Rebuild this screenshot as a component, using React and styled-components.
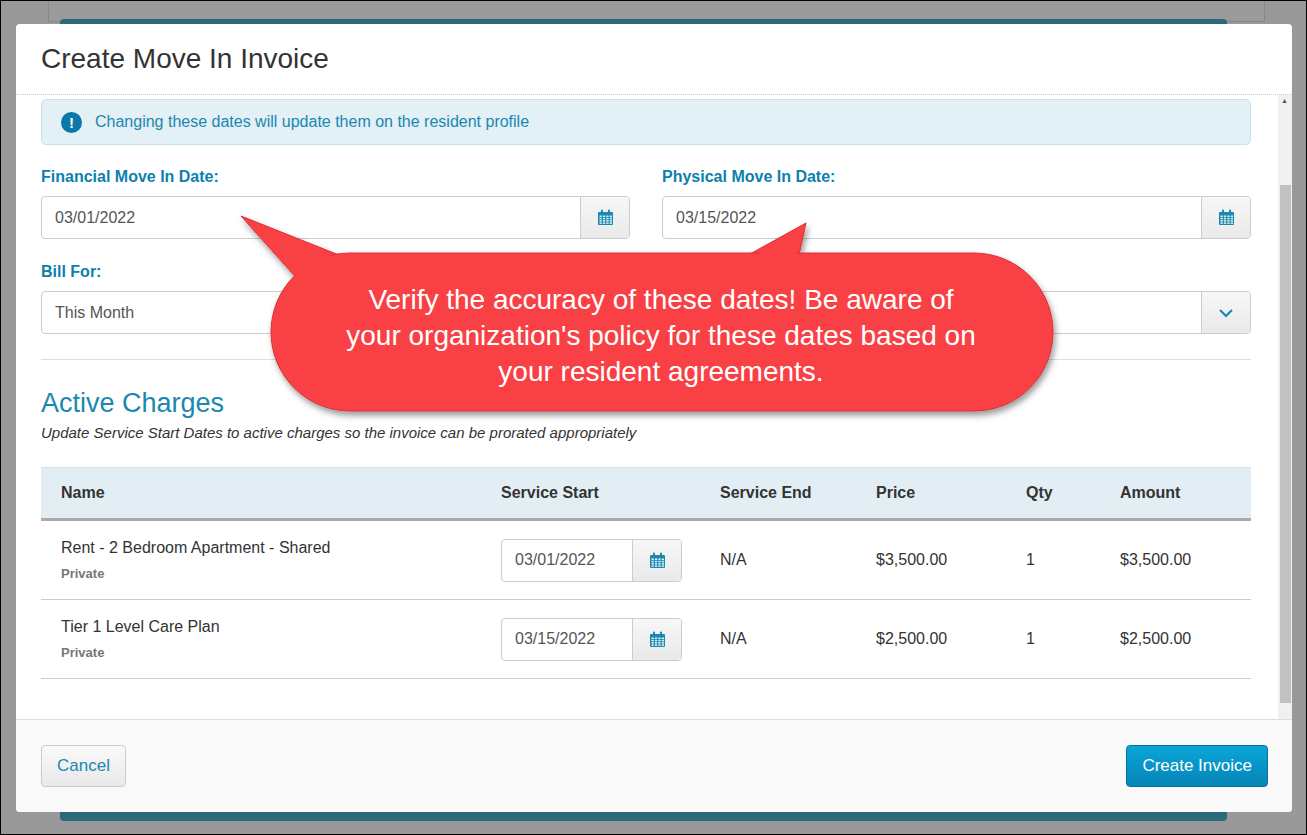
import React from "react";
import styled, { createGlobalStyle } from "styled-components";

const G = createGlobalStyle`
  html,body{margin:0;padding:0;}
  body{font-family:"Liberation Sans",Arial,sans-serif;width:1307px;height:835px;overflow:hidden;}
`;
const Page = styled.div`
  position:relative;width:1307px;height:835px;box-sizing:border-box;border:1px solid #000;
  background:#999;overflow:hidden;
`;
const BgCard = styled.div`
  position:absolute;left:47px;top:0;width:1215px;height:20px;border:1px solid #888;border-top:none;background:#9a9a9a;
`;
const BgBar = styled.div`
  position:absolute;left:59px;top:18px;width:1167px;height:5px;background:#2a6a7a;border-radius:4px 4px 0 0;
  &.b{top:810px;height:10px;border-radius:0 0 4px 4px;}
`;
const Modal = styled.div`
  position:absolute;left:15px;top:23px;width:1276px;height:788px;background:#fff;border-radius:4px;
  display:flex;flex-direction:column;overflow:hidden;
`;
const Header = styled.div`
  height:70px;border-bottom:1px dotted #ccc;display:flex;align-items:center;padding:0 25px;
  font-size:28px;color:#333;flex-shrink:0;
`;
const BodyWrap = styled.div`flex:1;display:flex;min-height:0;`;
const Body = styled.div`flex:1;padding:4px 27px 0 25px;`;
const Scroll = styled.div`
  width:14px;background:#f0f0f0;position:relative;
  &::before{content:"";position:absolute;left:2px;right:1px;top:90px;bottom:16px;background:#c1c1c1;}
  &::after{content:"▲";position:absolute;top:2px;left:3px;font-size:7px;color:#555;}
`;
const Alert = styled.div`
  height:44px;background:#e3f0f5;border:1px solid #c6e2ea;border-radius:5px;display:flex;align-items:center;
  padding-left:19px;gap:13px;color:#1a88b0;font-size:16px;
`;
const Excl = styled.span`
  width:21px;height:21px;border-radius:50%;background:#0a78a8;color:#fff;font-weight:bold;font-size:15px;
  display:flex;align-items:center;justify-content:center;
`;
const Row2 = styled.div`display:grid;grid-template-columns:1fr 1fr;gap:32px;margin-top:23px;`;
const Label = styled.div`color:#0c7fae;font-weight:bold;font-size:16px;margin-bottom:10px;`;
const BillFor = styled.div`margin-top:24px;`;
const InputGroup = styled.div`
  display:flex;height:43px;border:1px solid #ccc;border-radius:4px;overflow:hidden;box-sizing:border-box;
  width:${p=>p.w||"auto"};
`;
const Field = styled.div`flex:1;display:flex;align-items:center;padding-left:13px;font-size:16px;color:#555;`;
const Addon = styled.div`
  width:48px;border-left:1px solid #ccc;background:linear-gradient(#f7f7f7,#e9e9e9);
  display:flex;align-items:center;justify-content:center;color:#0c7fae;
`;
const Hr = styled.div`border-top:1px solid #ddd;margin:25px 0 28px;`;
const H2 = styled.div`font-size:27px;color:#1a88b0;`;
const Sub = styled.div`font-style:italic;font-size:15px;color:#333;margin-top:5px;`;
const Table = styled.div`margin-top:26px;`;
const Grid = styled.div`
  display:grid;grid-template-columns:440px 219px 156px 150px 94px 1fr;padding-left:20px;align-items:center;
`;
const THead = styled(Grid)`
  height:50px;background:#e3eef4;border-top:1px solid #d3e3ea;border-bottom:3px solid #aaa;font-weight:bold;font-size:16px;color:#333;
`;
const TRow = styled(Grid)`height:78px;border-bottom:1px solid #ccc;font-size:16px;color:#333;`;
const Small = styled.div`font-size:13px;font-weight:bold;color:#777;margin-top:9px;`;
const Footer = styled.div`
  height:92px;border-top:1px solid #ddd;background:#f9f9f9;display:flex;justify-content:space-between;
  align-items:center;padding:0 24px 0 25px;flex-shrink:0;
`;
const Btn = styled.div`
  height:42px;box-sizing:border-box;border-radius:4px;display:flex;align-items:center;padding:0 15px;font-size:17px;
  ${p=>p.primary?`background:linear-gradient(#0aa6d8,#0584b6);color:#fff;border:1px solid #06719c;`:
  `background:linear-gradient(#fafafa,#e8e8e8);color:#1a88b0;border:1px solid #ccc;`}
`;
const Callout = styled.div`position:absolute;left:0;top:0;width:1307px;height:835px;pointer-events:none;`;
const CalloutText = styled.div`
  position:absolute;left:340px;top:281px;width:640px;text-align:center;color:#fff;font-size:28px;line-height:36px;
`;

const Cal = () => (
  <svg width="17" height="17" viewBox="0 0 17 17" fill="#1a88b0">
    <rect x="1" y="3" width="15" height="13" rx="1"/>
    <rect x="4" y="0.5" width="2" height="4" rx="1"/><rect x="11" y="0.5" width="2" height="4" rx="1"/>
    <g fill="#e0f0f7">
      {[0,1,2,3].map(r=>[0,1,2,3].map(c=><rect key={r+"-"+c} x={2.5+c*3.4} y={6.5+r*2.3} width="2.3" height="1.5"/>))}
    </g>
  </svg>
);
const DateInput = ({v,w}) => (<InputGroup w={w}><Field>{v}</Field><Addon><Cal/></Addon></InputGroup>);

export default function App(){
  return (<>
    <G/>
    <Page>
      <BgCard/><BgBar/><BgBar className="b"/>
      <Modal>
        <Header>Create Move In Invoice</Header>
        <BodyWrap>
          <Body>
            <Alert><Excl>!</Excl>Changing these dates will update them on the resident profile</Alert>
            <Row2>
              <div><Label>Financial Move In Date:</Label><DateInput v="03/01/2022"/></div>
              <div><Label>Physical Move In Date:</Label><DateInput v="03/15/2022"/></div>
            </Row2>
            <BillFor>
              <Label>Bill For:</Label>
              <InputGroup><Field>This Month</Field><Addon>
                <svg width="16" height="10" viewBox="0 0 16 10"><path d="M2 2l6 6 6-6" stroke="#1a88b0" strokeWidth="2.2" fill="none"/></svg>
              </Addon></InputGroup>
            </BillFor>
            <Hr/>
            <H2>Active Charges</H2>
            <Sub>Update Service Start Dates to active charges so the invoice can be prorated appropriately</Sub>
            <Table>
              <THead><div>Name</div><div>Service Start</div><div>Service End</div><div>Price</div><div>Qty</div><div>Amount</div></THead>
              <TRow><div>Rent - 2 Bedroom Apartment - Shared<Small>Private</Small></div><DateInput v="03/01/2022" w="181px"/><div>N/A</div><div>$3,500.00</div><div>1</div><div>$3,500.00</div></TRow>
              <TRow><div>Tier 1 Level Care Plan<Small>Private</Small></div><DateInput v="03/15/2022" w="181px"/><div>N/A</div><div>$2,500.00</div><div>1</div><div>$2,500.00</div></TRow>
            </Table>
          </Body>
          <Scroll/>
        </BodyWrap>
        <Footer><Btn>Cancel</Btn><Btn primary>Create Invoice</Btn></Footer>
      </Modal>
      <Callout>
        <svg width="1307" height="835">
          <defs><filter id="s" x="-10%" y="-10%" width="120%" height="130%"><feDropShadow dx="2" dy="4" stdDeviation="3" floodOpacity="0.4"/></filter></defs>
          <g filter="url(#s)" fill="#f94144" stroke="#d93030" strokeWidth="1">
            <path d="M348 258 L240 215 L300 282 Z"/>
            <path d="M740 258 L805 222 L790 290 Z"/>
            <rect x="270" y="252" width="782" height="158" rx="79"/>
          </g>
          <g fill="#f94144"><path d="M346 262 L243 218 L304 286 Z"/><path d="M742 262 L802 226 L786 292 Z"/></g>
        </svg>
        <CalloutText>Verify the accuracy of these dates! Be aware of your organization's policy for these dates based on your resident agreements.</CalloutText>
      </Callout>
    </Page>
  </>);
}
